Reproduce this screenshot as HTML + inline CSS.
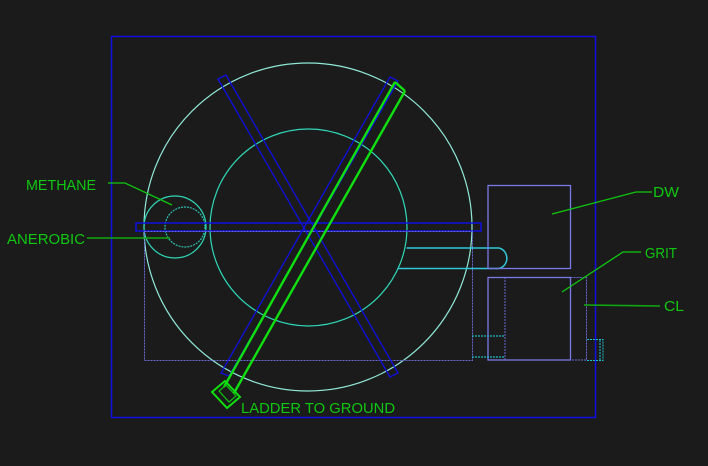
<!DOCTYPE html>
<html><head><style>
html,body{margin:0;padding:0;background:#1b1b1b;width:708px;height:466px;overflow:hidden}
text{font-family:"Liberation Sans",sans-serif;font-size:15px;fill:#10c810}
</style></head><body>
<svg width="708" height="466" viewBox="0 0 708 466" xmlns="http://www.w3.org/2000/svg">
<rect x="111.5" y="36.5" width="484" height="381" fill="none" stroke="#1010e0" stroke-width="1.5"/>
<circle cx="308" cy="227" r="164" fill="none" stroke="#90e8d8" stroke-width="1.2"/>
<circle cx="308.5" cy="227.5" r="98.5" fill="none" stroke="#30d8b8" stroke-width="1.2"/>
<circle cx="175" cy="227" r="31" fill="none" stroke="#30d8b8" stroke-width="1.2"/>
<circle cx="185" cy="227" r="20" fill="none" stroke="#30c0b0" stroke-width="1.2" stroke-dasharray="2 1"/>
<rect x="136" y="223" width="345" height="8" fill="none" stroke="#1010e0" stroke-width="1.5"/>
<rect x="144.5" y="231.5" width="328" height="129" fill="none" stroke="#6b6bd8" stroke-width="1" stroke-dasharray="2 1"/>
<path d="M406.5 248 H499 A10 10.5 0 0 1 499 268.5 H398" fill="none" stroke="#30c8d8" stroke-width="1.5"/>
<rect x="488" y="185.5" width="82.5" height="83" fill="none" stroke="#7a7ae8" stroke-width="1.3"/>
<rect x="488" y="277.5" width="82.5" height="82.5" fill="none" stroke="#7a7ae8" stroke-width="1.3"/>
<path d="M505 277 V360 M570.5 277.5 H586.5 V360 H570" fill="none" stroke="#6b6bd8" stroke-dasharray="2 1"/>
<path d="M472 336 H505 M472 357 H505" stroke="#20b8c0" stroke-width="1.3" stroke-dasharray="2 1"/>
<path d="M587 339.5 H603 V360.5 H587 M600 340 V360" fill="none" stroke="#20c0d0" stroke-dasharray="2 1"/>
<polygon points="218,79 226,75 398,373 390,377" fill="none" stroke="#1010e0" stroke-width="1.3"/>
<polygon points="390,77 398,81 229,376 221,373" fill="none" stroke="#1010e0" stroke-width="1.3"/>
<path d="M395 82 L224 387 M405 91 L234 393 M395 82 L405 91" stroke="#10e010" stroke-width="2.4" fill="none"/>
<polygon points="212,392 225,381 240,397 227,408" fill="none" stroke="#10e010" stroke-width="2"/>
<polygon points="219,391 226,385 236,396 229,402" fill="none" stroke="#10c010" stroke-width="1.2"/>
<path d="M108 183 H125 L172 205" stroke="#10c810" fill="none" stroke-width="1.3"/>
<path d="M87 238 H170" stroke="#10a810" fill="none" stroke-width="1.6"/>
<path d="M552 214 L636 192 H652" stroke="#10c810" fill="none" stroke-width="1.3"/>
<path d="M562 292 L623 252 H641" stroke="#10c810" fill="none" stroke-width="1.3"/>
<path d="M584 305 L660 306" stroke="#10a810" fill="none" stroke-width="1.6"/>
<text x="26" y="190" textLength="70" lengthAdjust="spacingAndGlyphs">METHANE</text>
<text x="7" y="244" textLength="78" lengthAdjust="spacingAndGlyphs">ANEROBIC</text>
<text x="653" y="197" textLength="26" lengthAdjust="spacingAndGlyphs">DW</text>
<text x="645" y="258" textLength="32" lengthAdjust="spacingAndGlyphs">GRIT</text>
<text x="664" y="311" textLength="20" lengthAdjust="spacingAndGlyphs">CL</text>
<text x="241" y="413" textLength="154" lengthAdjust="spacingAndGlyphs">LADDER TO GROUND</text>
</svg>
</body></html>
